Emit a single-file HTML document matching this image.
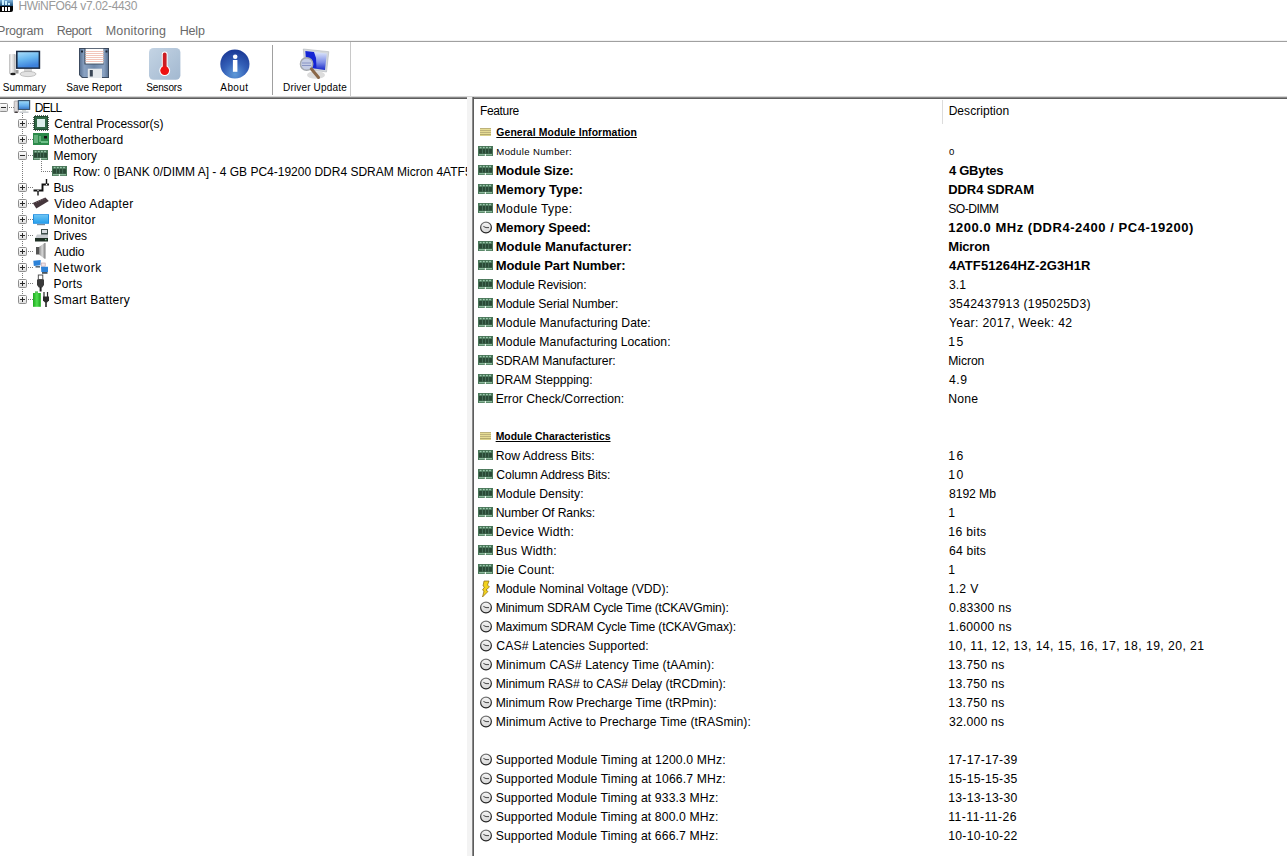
<!DOCTYPE html><html><head><meta charset="utf-8"><style>
html,body{margin:0;padding:0;}
body{width:1287px;height:856px;overflow:hidden;position:relative;background:#fff;font-family:"Liberation Sans",sans-serif;color:#000;}
.a{position:absolute;white-space:pre;}
svg{position:absolute;overflow:visible;}
</style></head><body>
<svg width="0" height="0" style="position:absolute;left:0;top:0">
<defs>
<symbol id="mem" viewBox="0 0 15 10">
 <rect x="0" y="0" width="15" height="10" fill="#4a7659"/>
 <rect x="1.7" y="0.9" width="1.8" height="1.3" fill="#9ccaae"/>
 <rect x="4.9" y="0.9" width="1.8" height="1.3" fill="#9ccaae"/>
 <rect x="8" y="0.9" width="1.8" height="1.3" fill="#9ccaae"/>
 <rect x="11.1" y="0.9" width="1.8" height="1.3" fill="#9ccaae"/>
 <rect x="1" y="3" width="13" height="4.6" fill="#2a4a36"/>
 <rect x="4.2" y="3" width="0.7" height="4.6" fill="#55806a"/>
 <rect x="7.3" y="3" width="0.7" height="4.6" fill="#55806a"/>
 <rect x="10.4" y="3" width="0.7" height="4.6" fill="#55806a"/>
 <rect x="1" y="8" width="5.8" height="1.3" fill="#8ab89a"/>
 <rect x="8" y="8" width="6" height="1.3" fill="#8ab89a"/>
 <rect x="6.8" y="8" width="1.2" height="2" fill="#e8f4ec"/>
</symbol>
<linearGradient id="clks" x1="0" y1="0" x2="0.3" y2="1"><stop offset="0" stop-color="#8a8a8a"/><stop offset="0.5" stop-color="#3a3a3a"/><stop offset="1" stop-color="#222"/></linearGradient>
<linearGradient id="clkf" x1="0" y1="0" x2="0" y2="1"><stop offset="0" stop-color="#f6f6f6"/><stop offset="1" stop-color="#d6d6d6"/></linearGradient>
<symbol id="clk" viewBox="0 0 13 13">
 <circle cx="6" cy="6.5" r="5.4" fill="url(#clkf)" stroke="url(#clks)" stroke-width="1.2"/>
 <path d="M3.4 5.4 L6 6.6 L9 6.6" fill="none" stroke="#333" stroke-width="0.9"/>
</symbol>
<symbol id="stk" viewBox="0 0 11 8">
 <rect x="0" y="0" width="11" height="8" fill="#e6dc94"/>
 <rect x="0" y="0" width="11" height="1" fill="#bdb27a"/>
 <rect x="0" y="2" width="11" height="1" fill="#bdb27a"/>
 <rect x="0" y="4" width="11" height="1" fill="#bdb27a"/>
 <rect x="0" y="6" width="11" height="1.2" fill="#b4aa6c"/>
</symbol>
<symbol id="plus" viewBox="0 0 9 9">
 <rect x="0.5" y="0.5" width="8" height="8" fill="#fff" stroke="#a0a0a0" stroke-width="1"/>
 <path d="M2 4.5 H7 M4.5 2 V7" stroke="#333" stroke-width="1"/>
</symbol>
<symbol id="minus" viewBox="0 0 9 9">
 <rect x="0.5" y="0.5" width="8" height="8" fill="#fff" stroke="#a0a0a0" stroke-width="1"/>
 <path d="M2 4.5 H7" stroke="#333" stroke-width="1"/>
</symbol>
</defs></svg>
<svg style="left:0;top:0" width="14" height="13" viewBox="0 0 14 13">
<defs><linearGradient id="tig" x1="0" y1="0" x2="0" y2="1"><stop offset="0" stop-color="#7fb4dc"/><stop offset="1" stop-color="#1d4f7a"/></linearGradient></defs>
<path d="M0 0 H13 V10 Q13 12 11 12 H0 Z" fill="#050505"/>
<rect x="0" y="0" width="13" height="6" fill="url(#tig)"/>
<rect x="2" y="0" width="2" height="5" fill="#c8f0ff"/><rect x="5" y="1" width="2" height="4" fill="#c8f0ff"/><rect x="8" y="3" width="2" height="2" fill="#c8f0ff"/>
<rect x="2" y="7" width="2" height="4" fill="#fff"/><rect x="5" y="7" width="2" height="4" fill="#fff"/><rect x="8" y="7" width="2" height="4" fill="#fff"/>
</svg>
<div class="a" style="left:18.39px;top:-2px;font-size:12px;line-height:16px;font-weight:400;color:#9a9a9a;letter-spacing:-0.317px;">HWiNFO64 v7.02-4430</div>
<div class="a" style="left:-3.00px;top:23px;font-size:12.5px;line-height:16px;font-weight:400;color:#6a6a6a;letter-spacing:-0.200px;">Program</div>
<div class="a" style="left:56.65px;top:23px;font-size:12.5px;line-height:16px;font-weight:400;color:#6a6a6a;letter-spacing:-0.500px;">Report</div>
<div class="a" style="left:105.65px;top:23px;font-size:12.5px;line-height:16px;font-weight:400;color:#6a6a6a;letter-spacing:0.222px;">Monitoring</div>
<div class="a" style="left:179.65px;top:23px;font-size:12.5px;line-height:16px;font-weight:400;color:#6a6a6a;letter-spacing:-0.167px;">Help</div>
<div class="a" style="left:0;top:40px;width:1287px;height:1px;background:#f2f2f2;"></div>
<div class="a" style="left:0;top:41px;width:1287px;height:1px;background:#a0a0a0;"></div>
<div class="a" style="left:2.65px;top:80px;font-size:10px;line-height:16px;font-weight:400;color:#000;letter-spacing:0.083px;">Summary</div>
<div class="a" style="left:66.30px;top:80px;font-size:10px;line-height:16px;font-weight:400;color:#000;letter-spacing:-0.000px;">Save Report</div>
<div class="a" style="left:146.30px;top:80px;font-size:10px;line-height:16px;font-weight:400;color:#000;letter-spacing:-0.167px;">Sensors</div>
<div class="a" style="left:220.35px;top:80px;font-size:10px;line-height:16px;font-weight:400;color:#000;letter-spacing:0.375px;">About</div>
<div class="a" style="left:283.00px;top:80px;font-size:10px;line-height:16px;font-weight:400;color:#000;letter-spacing:0.167px;">Driver Update</div>

<svg style="left:0;top:40px" width="360" height="45" viewBox="0 40 360 45">
<defs>
 <linearGradient id="scr" x1="0" y1="0" x2="0.3" y2="1"><stop offset="0" stop-color="#a8dcfa"/><stop offset="0.5" stop-color="#6ab8f0"/><stop offset="1" stop-color="#3d82dc"/></linearGradient>
 <linearGradient id="silv" x1="0" y1="0" x2="1" y2="0"><stop offset="0" stop-color="#b8b8b8"/><stop offset="0.35" stop-color="#f4f4f4"/><stop offset="0.7" stop-color="#d8d8d8"/><stop offset="1" stop-color="#a0a0a0"/></linearGradient>
 <linearGradient id="flop" x1="0" y1="0" x2="1" y2="0"><stop offset="0" stop-color="#5d7596"/><stop offset="0.15" stop-color="#8aa2c2"/><stop offset="0.5" stop-color="#6f88aa"/><stop offset="0.85" stop-color="#8aa2c2"/><stop offset="1" stop-color="#5d7596"/></linearGradient>
 <linearGradient id="sens" x1="0" y1="0" x2="1" y2="1"><stop offset="0" stop-color="#c4d4e4"/><stop offset="1" stop-color="#a2b8d0"/></linearGradient>
 <radialGradient id="info" cx="0.5" cy="0.85" r="0.8"><stop offset="0" stop-color="#5e9ad8"/><stop offset="0.5" stop-color="#3460b8"/><stop offset="1" stop-color="#1c3c98"/></radialGradient>
 <linearGradient id="drv" x1="0" y1="0" x2="0" y2="1"><stop offset="0" stop-color="#e8f0fc"/><stop offset="0.6" stop-color="#7c8ce8"/><stop offset="1" stop-color="#1828c8"/></linearGradient>
</defs>
<!-- Summary -->
<rect x="9" y="54" width="6.5" height="20" rx="1" fill="url(#silv)"/>
<ellipse cx="13" cy="74" rx="2.8" ry="1.2" fill="#222"/>
<rect x="15.5" y="70" width="3" height="3.5" fill="#9a9a9a"/>
<rect x="24" y="68.5" width="8" height="4" fill="#d4d4d4"/>
<ellipse cx="28" cy="74" rx="8" ry="2.6" fill="#e2e2e2" stroke="#b4b4b4" stroke-width="0.8"/>
<rect x="16" y="50.7" width="24.2" height="18.2" fill="#1a2b44"/>
<rect x="17.6" y="52.2" width="21" height="15.2" fill="url(#scr)"/>
<!-- Save report -->
<path d="M79 48 H109 V78 H82 L79 75 Z" fill="#3c4a5e"/>
<path d="M80 49 H108 V77 H82.5 L80 74.5 Z" fill="url(#flop)"/>
<rect x="84.5" y="48.8" width="19.2" height="15.6" fill="#2e3a4c"/>
<rect x="85.5" y="48.8" width="18" height="14.8" fill="#fff"/>
<path d="M85.5 51.5 H103.5 M85.5 53.5 H103.5 M85.5 55.5 H103.5 M85.5 57.5 H103.5 M85.5 59.5 H103.5 M85.5 61.5 H103.5" stroke="#f0c0b4" stroke-width="0.9"/>
<rect x="81" y="50.5" width="2" height="2" fill="#1e2836"/>
<rect x="105.5" y="50.5" width="2" height="2" fill="#1e2836"/>
<rect x="87.8" y="68.7" width="14.2" height="9.3" fill="#e4e8ec"/>
<rect x="89.8" y="70" width="3" height="6.5" fill="#3a4656"/>
<!-- Sensors -->
<rect x="149" y="48" width="31.4" height="31.7" rx="4.5" fill="url(#sens)"/>
<rect x="161.8" y="51.6" width="5.8" height="20" rx="2.9" fill="#fff"/>
<circle cx="164.7" cy="70.6" r="5.4" fill="#fff"/>
<rect x="162.8" y="52.6" width="3.8" height="18" rx="1.9" fill="#cc1c22"/>
<circle cx="164.7" cy="70.6" r="4.4" fill="#ee1010"/>
<!-- About -->
<circle cx="234.9" cy="64" r="14.6" fill="url(#info)"/>
<path d="M221 62 Q235 48 249 60 Q242 54 235 55 Q226 56 221 62 Z" fill="#5a7ed0" opacity="0.35"/>
<circle cx="235.2" cy="56.8" r="2.3" fill="#fff"/>
<rect x="232.9" y="60" width="4.5" height="11.8" fill="#fff"/>
<!-- Driver update -->
<ellipse cx="316" cy="75" rx="9" ry="3.8" fill="#dcdcdc"/>
<path d="M303.3 49 L328.8 51.7 L326.5 72 L305 69 Z" fill="#d4d8dc" stroke="#b0b4b8" stroke-width="0.6"/>
<path d="M305.3 51 L326.8 53.5 L325 70 L306.6 67.6 Z" fill="url(#drv)"/>
<path d="M305.3 51 L314 52 L316 58 L316.5 68.3 L306.6 67.6 Z" fill="#1424d4"/>
<circle cx="306.6" cy="64" r="6.2" fill="#c4cce4" stroke="#a4a8ac" stroke-width="1.4"/>
<path d="M302 63 H311 M302 65.5 H311" stroke="#8894c4" stroke-width="1"/>
<path d="M311.5 69 L318.5 77.5" stroke="#8a6848" stroke-width="3" stroke-linecap="round"/>
</svg>

<div class="a" style="left:272px;top:45px;width:1px;height:50px;background:#a0a0a0;"></div>
<div class="a" style="left:350px;top:42px;width:1px;height:55px;background:#c8c8c8;"></div>
<div class="a" style="left:0;top:96px;width:1287px;height:1px;background:#d6d6d6;"></div>
<div class="a" style="left:0;top:97px;width:1287px;height:1px;background:#8a8a8a;"></div>
<div class="a" style="left:0;top:98px;width:1287px;height:1px;background:#5e5e5e;"></div>
<div class="a" style="left:467px;top:97px;width:5px;height:759px;background:#f3f3f3;"></div>
<div class="a" style="left:472px;top:97px;width:1px;height:759px;background:#8a8a8a;"></div>
<div class="a" style="left:473px;top:97px;width:1px;height:759px;background:#5c5c5c;"></div>
<svg style="left:0;top:98px" width="60" height="220" viewBox="0 98 60 220">
<defs>
 <linearGradient id="exg" x1="0" y1="0" x2="0" y2="1"><stop offset="0" stop-color="#ffffff"/><stop offset="1" stop-color="#dcdcdc"/></linearGradient>
 <linearGradient id="dscr" x1="0" y1="0" x2="0" y2="1"><stop offset="0" stop-color="#9ad8f8"/><stop offset="0.6" stop-color="#62acec"/><stop offset="1" stop-color="#3f7cc8"/></linearGradient>
 <linearGradient id="mscr" x1="0" y1="0" x2="0" y2="1"><stop offset="0" stop-color="#6cc4f4"/><stop offset="1" stop-color="#28a0ec"/></linearGradient>
 <linearGradient id="spk" x1="0" y1="0" x2="1" y2="0"><stop offset="0" stop-color="#8a8a8a"/><stop offset="0.5" stop-color="#d8d8d8"/><stop offset="1" stop-color="#7a7a7a"/></linearGradient>
 <linearGradient id="bat" x1="0" y1="0" x2="1" y2="0"><stop offset="0" stop-color="#1ea81e"/><stop offset="0.5" stop-color="#50e050"/><stop offset="1" stop-color="#18a018"/></linearGradient>
</defs>
<g fill="#7a7a7a"><rect x="22" y="113" width="1" height="1"/><rect x="22" y="115" width="1" height="1"/><rect x="22" y="117" width="1" height="1"/><rect x="22" y="119" width="1" height="1"/><rect x="22" y="121" width="1" height="1"/><rect x="22" y="123" width="1" height="1"/><rect x="22" y="125" width="1" height="1"/><rect x="22" y="127" width="1" height="1"/><rect x="22" y="129" width="1" height="1"/><rect x="22" y="131" width="1" height="1"/><rect x="22" y="133" width="1" height="1"/><rect x="22" y="135" width="1" height="1"/><rect x="22" y="137" width="1" height="1"/><rect x="22" y="139" width="1" height="1"/><rect x="22" y="141" width="1" height="1"/><rect x="22" y="143" width="1" height="1"/><rect x="22" y="145" width="1" height="1"/><rect x="22" y="147" width="1" height="1"/><rect x="22" y="149" width="1" height="1"/><rect x="22" y="151" width="1" height="1"/><rect x="22" y="153" width="1" height="1"/><rect x="22" y="155" width="1" height="1"/><rect x="22" y="157" width="1" height="1"/><rect x="22" y="159" width="1" height="1"/><rect x="22" y="161" width="1" height="1"/><rect x="22" y="163" width="1" height="1"/><rect x="22" y="165" width="1" height="1"/><rect x="22" y="167" width="1" height="1"/><rect x="22" y="169" width="1" height="1"/><rect x="22" y="171" width="1" height="1"/><rect x="22" y="173" width="1" height="1"/><rect x="22" y="175" width="1" height="1"/><rect x="22" y="177" width="1" height="1"/><rect x="22" y="179" width="1" height="1"/><rect x="22" y="181" width="1" height="1"/><rect x="22" y="183" width="1" height="1"/><rect x="22" y="185" width="1" height="1"/><rect x="22" y="187" width="1" height="1"/><rect x="22" y="189" width="1" height="1"/><rect x="22" y="191" width="1" height="1"/><rect x="22" y="193" width="1" height="1"/><rect x="22" y="195" width="1" height="1"/><rect x="22" y="197" width="1" height="1"/><rect x="22" y="199" width="1" height="1"/><rect x="22" y="201" width="1" height="1"/><rect x="22" y="203" width="1" height="1"/><rect x="22" y="205" width="1" height="1"/><rect x="22" y="207" width="1" height="1"/><rect x="22" y="209" width="1" height="1"/><rect x="22" y="211" width="1" height="1"/><rect x="22" y="213" width="1" height="1"/><rect x="22" y="215" width="1" height="1"/><rect x="22" y="217" width="1" height="1"/><rect x="22" y="219" width="1" height="1"/><rect x="22" y="221" width="1" height="1"/><rect x="22" y="223" width="1" height="1"/><rect x="22" y="225" width="1" height="1"/><rect x="22" y="227" width="1" height="1"/><rect x="22" y="229" width="1" height="1"/><rect x="22" y="231" width="1" height="1"/><rect x="22" y="233" width="1" height="1"/><rect x="22" y="235" width="1" height="1"/><rect x="22" y="237" width="1" height="1"/><rect x="22" y="239" width="1" height="1"/><rect x="22" y="241" width="1" height="1"/><rect x="22" y="243" width="1" height="1"/><rect x="22" y="245" width="1" height="1"/><rect x="22" y="247" width="1" height="1"/><rect x="22" y="249" width="1" height="1"/><rect x="22" y="251" width="1" height="1"/><rect x="22" y="253" width="1" height="1"/><rect x="22" y="255" width="1" height="1"/><rect x="22" y="257" width="1" height="1"/><rect x="22" y="259" width="1" height="1"/><rect x="22" y="261" width="1" height="1"/><rect x="22" y="263" width="1" height="1"/><rect x="22" y="265" width="1" height="1"/><rect x="22" y="267" width="1" height="1"/><rect x="22" y="269" width="1" height="1"/><rect x="22" y="271" width="1" height="1"/><rect x="22" y="273" width="1" height="1"/><rect x="22" y="275" width="1" height="1"/><rect x="22" y="277" width="1" height="1"/><rect x="22" y="279" width="1" height="1"/><rect x="22" y="281" width="1" height="1"/><rect x="22" y="283" width="1" height="1"/><rect x="22" y="285" width="1" height="1"/><rect x="22" y="287" width="1" height="1"/><rect x="22" y="289" width="1" height="1"/><rect x="22" y="291" width="1" height="1"/><rect x="22" y="293" width="1" height="1"/><rect x="22" y="295" width="1" height="1"/><rect x="22" y="297" width="1" height="1"/><rect x="22" y="299" width="1" height="1"/><rect x="9" y="107" width="1" height="1"/><rect x="11" y="107" width="1" height="1"/><rect x="13" y="107" width="1" height="1"/><rect x="28" y="123" width="1" height="1"/><rect x="30" y="123" width="1" height="1"/><rect x="32" y="123" width="1" height="1"/><rect x="28" y="139" width="1" height="1"/><rect x="30" y="139" width="1" height="1"/><rect x="32" y="139" width="1" height="1"/><rect x="28" y="155" width="1" height="1"/><rect x="30" y="155" width="1" height="1"/><rect x="32" y="155" width="1" height="1"/><rect x="28" y="187" width="1" height="1"/><rect x="30" y="187" width="1" height="1"/><rect x="32" y="187" width="1" height="1"/><rect x="28" y="203" width="1" height="1"/><rect x="30" y="203" width="1" height="1"/><rect x="32" y="203" width="1" height="1"/><rect x="28" y="219" width="1" height="1"/><rect x="30" y="219" width="1" height="1"/><rect x="32" y="219" width="1" height="1"/><rect x="28" y="235" width="1" height="1"/><rect x="30" y="235" width="1" height="1"/><rect x="32" y="235" width="1" height="1"/><rect x="28" y="251" width="1" height="1"/><rect x="30" y="251" width="1" height="1"/><rect x="32" y="251" width="1" height="1"/><rect x="28" y="267" width="1" height="1"/><rect x="30" y="267" width="1" height="1"/><rect x="32" y="267" width="1" height="1"/><rect x="28" y="283" width="1" height="1"/><rect x="30" y="283" width="1" height="1"/><rect x="32" y="283" width="1" height="1"/><rect x="28" y="299" width="1" height="1"/><rect x="30" y="299" width="1" height="1"/><rect x="32" y="299" width="1" height="1"/><rect x="41" y="161" width="1" height="1"/><rect x="41" y="163" width="1" height="1"/><rect x="41" y="165" width="1" height="1"/><rect x="41" y="167" width="1" height="1"/><rect x="41" y="169" width="1" height="1"/><rect x="41" y="171" width="1" height="1"/><rect x="43" y="171" width="1" height="1"/><rect x="45" y="171" width="1" height="1"/><rect x="47" y="171" width="1" height="1"/><rect x="49" y="171" width="1" height="1"/><rect x="51" y="171" width="1" height="1"/></g>
<rect x="-0.5" y="103.5" width="8" height="8" rx="1" fill="url(#exg)" stroke="#8e8e8e" stroke-width="1"/><rect x="1" y="107" width="5" height="1" fill="#2a2a2a"/>
<rect x="18.5" y="119.5" width="8" height="8" rx="1" fill="url(#exg)" stroke="#8e8e8e" stroke-width="1"/><rect x="20" y="123" width="5" height="1" fill="#2a2a2a"/><rect x="22" y="121" width="1" height="5" fill="#2a2a2a"/>
<rect x="18.5" y="135.5" width="8" height="8" rx="1" fill="url(#exg)" stroke="#8e8e8e" stroke-width="1"/><rect x="20" y="139" width="5" height="1" fill="#2a2a2a"/><rect x="22" y="137" width="1" height="5" fill="#2a2a2a"/>
<rect x="18.5" y="151.5" width="8" height="8" rx="1" fill="url(#exg)" stroke="#8e8e8e" stroke-width="1"/><rect x="20" y="155" width="5" height="1" fill="#2a2a2a"/>
<rect x="18.5" y="183.5" width="8" height="8" rx="1" fill="url(#exg)" stroke="#8e8e8e" stroke-width="1"/><rect x="20" y="187" width="5" height="1" fill="#2a2a2a"/><rect x="22" y="185" width="1" height="5" fill="#2a2a2a"/>
<rect x="18.5" y="199.5" width="8" height="8" rx="1" fill="url(#exg)" stroke="#8e8e8e" stroke-width="1"/><rect x="20" y="203" width="5" height="1" fill="#2a2a2a"/><rect x="22" y="201" width="1" height="5" fill="#2a2a2a"/>
<rect x="18.5" y="215.5" width="8" height="8" rx="1" fill="url(#exg)" stroke="#8e8e8e" stroke-width="1"/><rect x="20" y="219" width="5" height="1" fill="#2a2a2a"/><rect x="22" y="217" width="1" height="5" fill="#2a2a2a"/>
<rect x="18.5" y="231.5" width="8" height="8" rx="1" fill="url(#exg)" stroke="#8e8e8e" stroke-width="1"/><rect x="20" y="235" width="5" height="1" fill="#2a2a2a"/><rect x="22" y="233" width="1" height="5" fill="#2a2a2a"/>
<rect x="18.5" y="247.5" width="8" height="8" rx="1" fill="url(#exg)" stroke="#8e8e8e" stroke-width="1"/><rect x="20" y="251" width="5" height="1" fill="#2a2a2a"/><rect x="22" y="249" width="1" height="5" fill="#2a2a2a"/>
<rect x="18.5" y="263.5" width="8" height="8" rx="1" fill="url(#exg)" stroke="#8e8e8e" stroke-width="1"/><rect x="20" y="267" width="5" height="1" fill="#2a2a2a"/><rect x="22" y="265" width="1" height="5" fill="#2a2a2a"/>
<rect x="18.5" y="279.5" width="8" height="8" rx="1" fill="url(#exg)" stroke="#8e8e8e" stroke-width="1"/><rect x="20" y="283" width="5" height="1" fill="#2a2a2a"/><rect x="22" y="281" width="1" height="5" fill="#2a2a2a"/>
<rect x="18.5" y="295.5" width="8" height="8" rx="1" fill="url(#exg)" stroke="#8e8e8e" stroke-width="1"/><rect x="20" y="299" width="5" height="1" fill="#2a2a2a"/><rect x="22" y="297" width="1" height="5" fill="#2a2a2a"/>
<rect x="14.2" y="101" width="4.2" height="11" rx="0.6" fill="#dcd8d8" stroke="#9a9698" stroke-width="0.7"/>
<ellipse cx="16.2" cy="112.3" rx="2" ry="0.8" fill="#3a3436"/>
<rect x="17.8" y="100" width="12.4" height="10" rx="0.6" fill="#3c5670"/><rect x="19" y="101.2" width="10" height="7.8" fill="url(#dscr)"/>
<rect x="22" y="110" width="4" height="1.5" fill="#d8dcd8"/><rect x="19.5" y="111.5" width="9" height="1.4" fill="#c4c8cc"/>
<rect x="34" y="116" width="14" height="14" fill="#1f4a30"/>
<rect x="35" y="117" width="12" height="12" fill="#2f6644"/>
<g fill="#56625a"><rect x="35" y="115" width="1" height="1"/><rect x="35" y="130" width="1" height="1"/><rect x="37" y="115" width="1" height="1"/><rect x="37" y="130" width="1" height="1"/><rect x="39" y="115" width="1" height="1"/><rect x="39" y="130" width="1" height="1"/><rect x="41" y="115" width="1" height="1"/><rect x="41" y="130" width="1" height="1"/><rect x="43" y="115" width="1" height="1"/><rect x="43" y="130" width="1" height="1"/><rect x="45" y="115" width="1" height="1"/><rect x="45" y="130" width="1" height="1"/><rect x="47" y="115" width="1" height="1"/><rect x="47" y="130" width="1" height="1"/><rect x="33" y="117" width="1" height="1"/><rect x="48" y="117" width="1" height="1"/><rect x="33" y="119" width="1" height="1"/><rect x="48" y="119" width="1" height="1"/><rect x="33" y="121" width="1" height="1"/><rect x="48" y="121" width="1" height="1"/><rect x="33" y="123" width="1" height="1"/><rect x="48" y="123" width="1" height="1"/><rect x="33" y="125" width="1" height="1"/><rect x="48" y="125" width="1" height="1"/><rect x="33" y="127" width="1" height="1"/><rect x="48" y="127" width="1" height="1"/><rect x="33" y="129" width="1" height="1"/><rect x="48" y="129" width="1" height="1"/></g>
<rect x="37" y="119" width="8" height="8" fill="#dcefec"/>
<rect x="33" y="133" width="16" height="12" fill="#2c8a4a"/>
<path d="M35 135 V143 M37 135 V143 M40 136 V142" stroke="#a8e0b8" stroke-width="0.9"/>
<rect x="44" y="136" width="3" height="2.5" fill="#111"/><rect x="41" y="141" width="7" height="2" fill="#6cc088"/>
<svg x="33" y="150" width="15" height="10"><use href="#mem"/></svg>
<svg x="52" y="166" width="15" height="10"><use href="#mem"/></svg>
<path d="M33.5 190.5 H42.5 V184.5 H49" fill="none" stroke="#111" stroke-width="1.9"/>
<path d="M38 190 V195.5 M46.5 179 V185" fill="none" stroke="#111" stroke-width="1.4"/>
<circle cx="38" cy="190.5" r="0.7" fill="#fff"/><circle cx="46.5" cy="184.5" r="0.7" fill="#fff"/>
<path d="M32.8 203 L45.3 197.6 L48.8 201 L36.3 208.4 Z" fill="#45363c"/>
<path d="M36 202.5 L45 198.8" stroke="#7a686e" stroke-width="0.8" stroke-dasharray="1.2 1"/>
<rect x="33" y="214.2" width="16" height="9.6" fill="#1e8ee0"/><rect x="34" y="215" width="14" height="8" fill="url(#mscr)"/>
<rect x="37" y="224" width="8" height="1.2" fill="#7a8a9a"/>
<rect x="41" y="229" width="7" height="6.5" fill="#3e4e4a"/><rect x="42" y="230" width="5" height="3" fill="#d8dce0"/>
<path d="M35 238.5 L37 234.5 H48 V238.5 Z" fill="#c8ccd0"/>
<rect x="35" y="238" width="13" height="3.5" fill="#1e2e24"/><rect x="45" y="239.2" width="1.5" height="1" fill="#8ce0a0"/>
<rect x="36" y="247" width="3" height="7.5" fill="#555"/>
<path d="M39 247 L44.5 243 H45.5 V258.7 H44.5 L39 254.5 Z" fill="url(#spk)"/>
<path d="M33.3 260.8 L40.7 260 L40.5 265.3 L33.8 266 Z" fill="#2c82d8"/>
<rect x="35.5" y="266" width="4.5" height="1.6" fill="#5a6a78"/>
<rect x="41.2" y="263" width="4" height="3.2" fill="#f0e4e8" stroke="#b89ca4" stroke-width="0.6"/>
<path d="M41 266.7 L48 266.7 L48 272 L41.3 272 Z" fill="#2c82d8"/><rect x="42" y="272" width="5.5" height="1.8" fill="#4a5660"/>
<rect x="38.3" y="275" width="4.5" height="4.5" fill="none" stroke="#444" stroke-width="0.9"/>
<path d="M37 279.5 H44 V285 L42.2 287.5 H38.8 L37 285 Z" fill="#3a3a3a"/>
<rect x="39.6" y="287" width="2" height="4.5" fill="#222"/>
<rect x="35" y="291.3" width="3" height="2" fill="#60c060"/>
<rect x="33" y="293" width="7.8" height="13.8" fill="url(#bat)"/>
<path d="M44 292 V297 M47.5 292 V297" stroke="#2a2a2a" stroke-width="1.2"/>
<path d="M43 296.5 H49 V300.5 L47 302.5 H45 L43 300.5 Z" fill="#2a2a2a"/>
<rect x="45.2" y="302" width="1.6" height="5" fill="#2a2a2a"/>
</svg>
<div class="a" style="left:0;top:0;width:467px;height:856px;overflow:hidden;">
<div class="a" style="left:34.65px;top:100px;font-size:12px;line-height:16px;font-weight:400;color:#000;letter-spacing:-0.833px;">DELL</div>
<div class="a" style="left:54.28px;top:116px;font-size:12px;line-height:16px;font-weight:400;color:#000;letter-spacing:-0.047px;">Central Processor(s)</div>
<div class="a" style="left:53.58px;top:132px;font-size:12px;line-height:16px;font-weight:400;color:#000;letter-spacing:0.160px;">Motherboard</div>
<div class="a" style="left:53.58px;top:148px;font-size:12px;line-height:16px;font-weight:400;color:#000;letter-spacing:-0.000px;">Memory</div>
<div class="a" style="left:73.00px;top:164px;font-size:12px;line-height:16px;font-weight:400;color:#000;letter-spacing:0.000px;">Row: 0 [BANK 0/DIMM A] - 4 GB PC4-19200 DDR4 SDRAM Micron 4ATF51264HZ-2G3H1R</div>
<div class="a" style="left:53.58px;top:180px;font-size:12px;line-height:16px;font-weight:400;color:#000;letter-spacing:-0.250px;">Bus</div>
<div class="a" style="left:54.28px;top:196px;font-size:12px;line-height:16px;font-weight:400;color:#000;letter-spacing:0.317px;">Video Adapter</div>
<div class="a" style="left:53.58px;top:212px;font-size:12px;line-height:16px;font-weight:400;color:#000;letter-spacing:0.300px;">Monitor</div>
<div class="a" style="left:53.58px;top:228px;font-size:12px;line-height:16px;font-weight:400;color:#000;letter-spacing:-0.120px;">Drives</div>
<div class="a" style="left:54.28px;top:244px;font-size:12px;line-height:16px;font-weight:400;color:#000;letter-spacing:-0.150px;">Audio</div>
<div class="a" style="left:53.58px;top:260px;font-size:12px;line-height:16px;font-weight:400;color:#000;letter-spacing:0.617px;">Network</div>
<div class="a" style="left:53.58px;top:276px;font-size:12px;line-height:16px;font-weight:400;color:#000;letter-spacing:0.175px;">Ports</div>
<div class="a" style="left:53.58px;top:292px;font-size:12px;line-height:16px;font-weight:400;color:#000;letter-spacing:0.233px;">Smart Battery</div>
</div>
<div class="a" style="left:479.95px;top:103px;font-size:12px;line-height:16px;font-weight:400;color:#000;letter-spacing:-0.333px;">Feature</div>
<div class="a" style="left:948.65px;top:103px;font-size:12px;line-height:16px;font-weight:400;color:#000;letter-spacing:0.050px;">Description</div>
<div class="a" style="left:942px;top:100px;width:1px;height:24px;background:#dcdcdc;"></div>
<svg style="left:480px;top:128px" width="11" height="8"><use href="#stk"/></svg>
<div class="a" style="left:496.35px;top:125px;font-size:10.4px;line-height:16px;font-weight:700;color:#000;letter-spacing:0.100px;text-decoration:underline;">General Module Information</div>
<svg style="left:478px;top:146px" width="15" height="10"><use href="#mem"/></svg>
<div class="a" style="left:496.35px;top:144px;font-size:9.6px;line-height:16px;font-weight:400;color:#000;letter-spacing:0.346px;">Module Number:</div>
<div class="a" style="left:949.00px;top:144px;font-size:9.6px;line-height:16px;font-weight:400;color:#000;letter-spacing:0.500px;">0</div>
<svg style="left:478px;top:165px" width="15" height="10"><use href="#mem"/></svg>
<div class="a" style="left:495.65px;top:163px;font-size:13px;line-height:16px;font-weight:700;color:#000;letter-spacing:-0.136px;">Module Size:</div>
<div class="a" style="left:949.00px;top:163px;font-size:13px;line-height:16px;font-weight:700;color:#000;letter-spacing:-0.286px;">4 GBytes</div>
<svg style="left:478px;top:184px" width="15" height="10"><use href="#mem"/></svg>
<div class="a" style="left:495.65px;top:182px;font-size:13px;line-height:16px;font-weight:700;color:#000;letter-spacing:0.000px;">Memory Type:</div>
<div class="a" style="left:948.30px;top:182px;font-size:13px;line-height:16px;font-weight:700;color:#000;letter-spacing:-0.111px;">DDR4 SDRAM</div>
<svg style="left:478px;top:203px" width="15" height="10"><use href="#mem"/></svg>
<div class="a" style="left:495.65px;top:201px;font-size:12.2px;line-height:16px;font-weight:400;color:#000;letter-spacing:0.318px;">Module Type:</div>
<div class="a" style="left:948.30px;top:201px;font-size:12.2px;line-height:16px;font-weight:400;color:#000;letter-spacing:-0.583px;">SO-DIMM</div>
<svg style="left:480px;top:221px" width="13" height="13"><use href="#clk"/></svg>
<div class="a" style="left:495.65px;top:220px;font-size:13px;line-height:16px;font-weight:700;color:#000;letter-spacing:-0.125px;">Memory Speed:</div>
<div class="a" style="left:948.30px;top:220px;font-size:13px;line-height:16px;font-weight:700;color:#000;letter-spacing:0.530px;">1200.0 MHz (DDR4-2400 / PC4-19200)</div>
<svg style="left:478px;top:241px" width="15" height="10"><use href="#mem"/></svg>
<div class="a" style="left:495.65px;top:239px;font-size:13px;line-height:16px;font-weight:700;color:#000;letter-spacing:0.026px;">Module Manufacturer:</div>
<div class="a" style="left:948.30px;top:239px;font-size:13px;line-height:16px;font-weight:700;color:#000;letter-spacing:-0.200px;">Micron</div>
<svg style="left:478px;top:260px" width="15" height="10"><use href="#mem"/></svg>
<div class="a" style="left:495.65px;top:258px;font-size:13px;line-height:16px;font-weight:700;color:#000;letter-spacing:-0.083px;">Module Part Number:</div>
<div class="a" style="left:949.00px;top:258px;font-size:13px;line-height:16px;font-weight:700;color:#000;letter-spacing:0.088px;">4ATF51264HZ-2G3H1R</div>
<svg style="left:478px;top:279px" width="15" height="10"><use href="#mem"/></svg>
<div class="a" style="left:495.65px;top:277px;font-size:12.2px;line-height:16px;font-weight:400;color:#000;letter-spacing:-0.167px;">Module Revision:</div>
<div class="a" style="left:949.00px;top:277px;font-size:12.2px;line-height:16px;font-weight:400;color:#000;letter-spacing:-0.000px;">3.1</div>
<svg style="left:478px;top:298px" width="15" height="10"><use href="#mem"/></svg>
<div class="a" style="left:495.65px;top:296px;font-size:12.2px;line-height:16px;font-weight:400;color:#000;letter-spacing:-0.100px;">Module Serial Number:</div>
<div class="a" style="left:949.00px;top:296px;font-size:12.2px;line-height:16px;font-weight:400;color:#000;letter-spacing:0.300px;">3542437913 (195025D3)</div>
<svg style="left:478px;top:317px" width="15" height="10"><use href="#mem"/></svg>
<div class="a" style="left:495.65px;top:315px;font-size:12.2px;line-height:16px;font-weight:400;color:#000;letter-spacing:0.080px;">Module Manufacturing Date:</div>
<div class="a" style="left:949.00px;top:315px;font-size:12.2px;line-height:16px;font-weight:400;color:#000;letter-spacing:0.342px;">Year: 2017, Week: 42</div>
<svg style="left:478px;top:336px" width="15" height="10"><use href="#mem"/></svg>
<div class="a" style="left:495.65px;top:334px;font-size:12.2px;line-height:16px;font-weight:400;color:#000;letter-spacing:0.052px;">Module Manufacturing Location:</div>
<div class="a" style="left:948.30px;top:334px;font-size:12.2px;line-height:16px;font-weight:400;color:#000;letter-spacing:1.500px;">15</div>
<svg style="left:478px;top:355px" width="15" height="10"><use href="#mem"/></svg>
<div class="a" style="left:495.65px;top:353px;font-size:12.2px;line-height:16px;font-weight:400;color:#000;letter-spacing:-0.139px;">SDRAM Manufacturer:</div>
<div class="a" style="left:948.30px;top:353px;font-size:12.2px;line-height:16px;font-weight:400;color:#000;letter-spacing:-0.100px;">Micron</div>
<svg style="left:478px;top:374px" width="15" height="10"><use href="#mem"/></svg>
<div class="a" style="left:495.65px;top:372px;font-size:12.2px;line-height:16px;font-weight:400;color:#000;letter-spacing:-0.036px;">DRAM Steppping:</div>
<div class="a" style="left:949.00px;top:372px;font-size:12.2px;line-height:16px;font-weight:400;color:#000;letter-spacing:0.500px;">4.9</div>
<svg style="left:478px;top:393px" width="15" height="10"><use href="#mem"/></svg>
<div class="a" style="left:495.65px;top:391px;font-size:12.2px;line-height:16px;font-weight:400;color:#000;letter-spacing:0.023px;">Error Check/Correction:</div>
<div class="a" style="left:948.30px;top:391px;font-size:12.2px;line-height:16px;font-weight:400;color:#000;letter-spacing:0.167px;">None</div>
<svg style="left:480px;top:432px" width="11" height="8"><use href="#stk"/></svg>
<div class="a" style="left:495.65px;top:429px;font-size:10.4px;line-height:16px;font-weight:700;color:#000;letter-spacing:0.024px;text-decoration:underline;">Module Characteristics</div>
<svg style="left:478px;top:450px" width="15" height="10"><use href="#mem"/></svg>
<div class="a" style="left:495.65px;top:448px;font-size:12.2px;line-height:16px;font-weight:400;color:#000;letter-spacing:0.000px;">Row Address Bits:</div>
<div class="a" style="left:948.30px;top:448px;font-size:12.2px;line-height:16px;font-weight:400;color:#000;letter-spacing:1.500px;">16</div>
<svg style="left:478px;top:469px" width="15" height="10"><use href="#mem"/></svg>
<div class="a" style="left:496.35px;top:467px;font-size:12.2px;line-height:16px;font-weight:400;color:#000;letter-spacing:-0.132px;">Column Address Bits:</div>
<div class="a" style="left:948.30px;top:467px;font-size:12.2px;line-height:16px;font-weight:400;color:#000;letter-spacing:1.500px;">10</div>
<svg style="left:478px;top:488px" width="15" height="10"><use href="#mem"/></svg>
<div class="a" style="left:495.65px;top:486px;font-size:12.2px;line-height:16px;font-weight:400;color:#000;letter-spacing:0.036px;">Module Density:</div>
<div class="a" style="left:949.00px;top:486px;font-size:12.2px;line-height:16px;font-weight:400;color:#000;letter-spacing:-0.083px;">8192 Mb</div>
<svg style="left:478px;top:507px" width="15" height="10"><use href="#mem"/></svg>
<div class="a" style="left:495.65px;top:505px;font-size:12.2px;line-height:16px;font-weight:400;color:#000;letter-spacing:-0.100px;">Number Of Ranks:</div>
<div class="a" style="left:948.30px;top:505px;font-size:12.2px;line-height:16px;font-weight:400;color:#000;letter-spacing:-9.000px;">1</div>
<svg style="left:478px;top:526px" width="15" height="10"><use href="#mem"/></svg>
<div class="a" style="left:495.65px;top:524px;font-size:12.2px;line-height:16px;font-weight:400;color:#000;letter-spacing:0.250px;">Device Width:</div>
<div class="a" style="left:948.30px;top:524px;font-size:12.2px;line-height:16px;font-weight:400;color:#000;letter-spacing:0.333px;">16 bits</div>
<svg style="left:478px;top:545px" width="15" height="10"><use href="#mem"/></svg>
<div class="a" style="left:495.65px;top:543px;font-size:12.2px;line-height:16px;font-weight:400;color:#000;letter-spacing:0.222px;">Bus Width:</div>
<div class="a" style="left:949.00px;top:543px;font-size:12.2px;line-height:16px;font-weight:400;color:#000;letter-spacing:0.167px;">64 bits</div>
<svg style="left:478px;top:564px" width="15" height="10"><use href="#mem"/></svg>
<div class="a" style="left:495.65px;top:562px;font-size:12.2px;line-height:16px;font-weight:400;color:#000;letter-spacing:0.167px;">Die Count:</div>
<div class="a" style="left:948.30px;top:562px;font-size:12.2px;line-height:16px;font-weight:400;color:#000;letter-spacing:-9.000px;">1</div>
<svg style="left:482px;top:581px" width="8" height="16" viewBox="0 0 8 16"><path d="M2 0 H7 L5.5 4 L7.5 6 L4 9 L6 10.5 L0.5 16 L2 10 L0.5 9 L2.5 6 L1 5 Z" fill="#f2d21c" stroke="#8a6a10" stroke-width="0.7"/></svg>
<div class="a" style="left:495.65px;top:581px;font-size:12.2px;line-height:16px;font-weight:400;color:#000;letter-spacing:0.018px;">Module Nominal Voltage (VDD):</div>
<div class="a" style="left:948.30px;top:581px;font-size:12.2px;line-height:16px;font-weight:400;color:#000;letter-spacing:0.375px;">1.2 V</div>
<svg style="left:480px;top:601px" width="13" height="13"><use href="#clk"/></svg>
<div class="a" style="left:495.65px;top:600px;font-size:12.2px;line-height:16px;font-weight:400;color:#000;letter-spacing:-0.194px;">Minimum SDRAM Cycle Time (tCKAVGmin):</div>
<div class="a" style="left:949.00px;top:600px;font-size:12.2px;line-height:16px;font-weight:400;color:#000;letter-spacing:0.222px;">0.83300 ns</div>
<svg style="left:480px;top:620px" width="13" height="13"><use href="#clk"/></svg>
<div class="a" style="left:495.65px;top:619px;font-size:12.2px;line-height:16px;font-weight:400;color:#000;letter-spacing:-0.181px;">Maximum SDRAM Cycle Time (tCKAVGmax):</div>
<div class="a" style="left:948.30px;top:619px;font-size:12.2px;line-height:16px;font-weight:400;color:#000;letter-spacing:0.333px;">1.60000 ns</div>
<svg style="left:480px;top:639px" width="13" height="13"><use href="#clk"/></svg>
<div class="a" style="left:496.35px;top:638px;font-size:12.2px;line-height:16px;font-weight:400;color:#000;letter-spacing:0.083px;">CAS# Latencies Supported:</div>
<div class="a" style="left:948.30px;top:638px;font-size:12.2px;line-height:16px;font-weight:400;color:#000;letter-spacing:0.433px;">10, 11, 12, 13, 14, 15, 16, 17, 18, 19, 20, 21</div>
<svg style="left:480px;top:658px" width="13" height="13"><use href="#clk"/></svg>
<div class="a" style="left:495.65px;top:657px;font-size:12.2px;line-height:16px;font-weight:400;color:#000;letter-spacing:0.118px;">Minimum CAS# Latency Time (tAAmin):</div>
<div class="a" style="left:948.30px;top:657px;font-size:12.2px;line-height:16px;font-weight:400;color:#000;letter-spacing:0.312px;">13.750 ns</div>
<svg style="left:480px;top:677px" width="13" height="13"><use href="#clk"/></svg>
<div class="a" style="left:495.65px;top:676px;font-size:12.2px;line-height:16px;font-weight:400;color:#000;letter-spacing:-0.056px;">Minimum RAS# to CAS# Delay (tRCDmin):</div>
<div class="a" style="left:948.30px;top:676px;font-size:12.2px;line-height:16px;font-weight:400;color:#000;letter-spacing:0.312px;">13.750 ns</div>
<svg style="left:480px;top:696px" width="13" height="13"><use href="#clk"/></svg>
<div class="a" style="left:495.65px;top:695px;font-size:12.2px;line-height:16px;font-weight:400;color:#000;letter-spacing:-0.014px;">Minimum Row Precharge Time (tRPmin):</div>
<div class="a" style="left:948.30px;top:695px;font-size:12.2px;line-height:16px;font-weight:400;color:#000;letter-spacing:0.312px;">13.750 ns</div>
<svg style="left:480px;top:715px" width="13" height="13"><use href="#clk"/></svg>
<div class="a" style="left:495.65px;top:714px;font-size:12.2px;line-height:16px;font-weight:400;color:#000;letter-spacing:0.095px;">Minimum Active to Precharge Time (tRASmin):</div>
<div class="a" style="left:949.00px;top:714px;font-size:12.2px;line-height:16px;font-weight:400;color:#000;letter-spacing:0.188px;">32.000 ns</div>
<svg style="left:480px;top:753px" width="13" height="13"><use href="#clk"/></svg>
<div class="a" style="left:495.65px;top:752px;font-size:12.2px;line-height:16px;font-weight:400;color:#000;letter-spacing:0.135px;">Supported Module Timing at 1200.0 MHz:</div>
<div class="a" style="left:948.30px;top:752px;font-size:12.2px;line-height:16px;font-weight:400;color:#000;letter-spacing:0.250px;">17-17-17-39</div>
<svg style="left:480px;top:772px" width="13" height="13"><use href="#clk"/></svg>
<div class="a" style="left:495.65px;top:771px;font-size:12.2px;line-height:16px;font-weight:400;color:#000;letter-spacing:0.135px;">Supported Module Timing at 1066.7 MHz:</div>
<div class="a" style="left:948.30px;top:771px;font-size:12.2px;line-height:16px;font-weight:400;color:#000;letter-spacing:0.250px;">15-15-15-35</div>
<svg style="left:480px;top:791px" width="13" height="13"><use href="#clk"/></svg>
<div class="a" style="left:495.65px;top:790px;font-size:12.2px;line-height:16px;font-weight:400;color:#000;letter-spacing:0.125px;">Supported Module Timing at 933.3 MHz:</div>
<div class="a" style="left:948.30px;top:790px;font-size:12.2px;line-height:16px;font-weight:400;color:#000;letter-spacing:0.250px;">13-13-13-30</div>
<svg style="left:480px;top:810px" width="13" height="13"><use href="#clk"/></svg>
<div class="a" style="left:495.65px;top:809px;font-size:12.2px;line-height:16px;font-weight:400;color:#000;letter-spacing:0.125px;">Supported Module Timing at 800.0 MHz:</div>
<div class="a" style="left:948.30px;top:809px;font-size:12.2px;line-height:16px;font-weight:400;color:#000;letter-spacing:0.450px;">11-11-11-26</div>
<svg style="left:480px;top:829px" width="13" height="13"><use href="#clk"/></svg>
<div class="a" style="left:495.65px;top:828px;font-size:12.2px;line-height:16px;font-weight:400;color:#000;letter-spacing:0.125px;">Supported Module Timing at 666.7 MHz:</div>
<div class="a" style="left:948.30px;top:828px;font-size:12.2px;line-height:16px;font-weight:400;color:#000;letter-spacing:0.250px;">10-10-10-22</div>
</body></html>
